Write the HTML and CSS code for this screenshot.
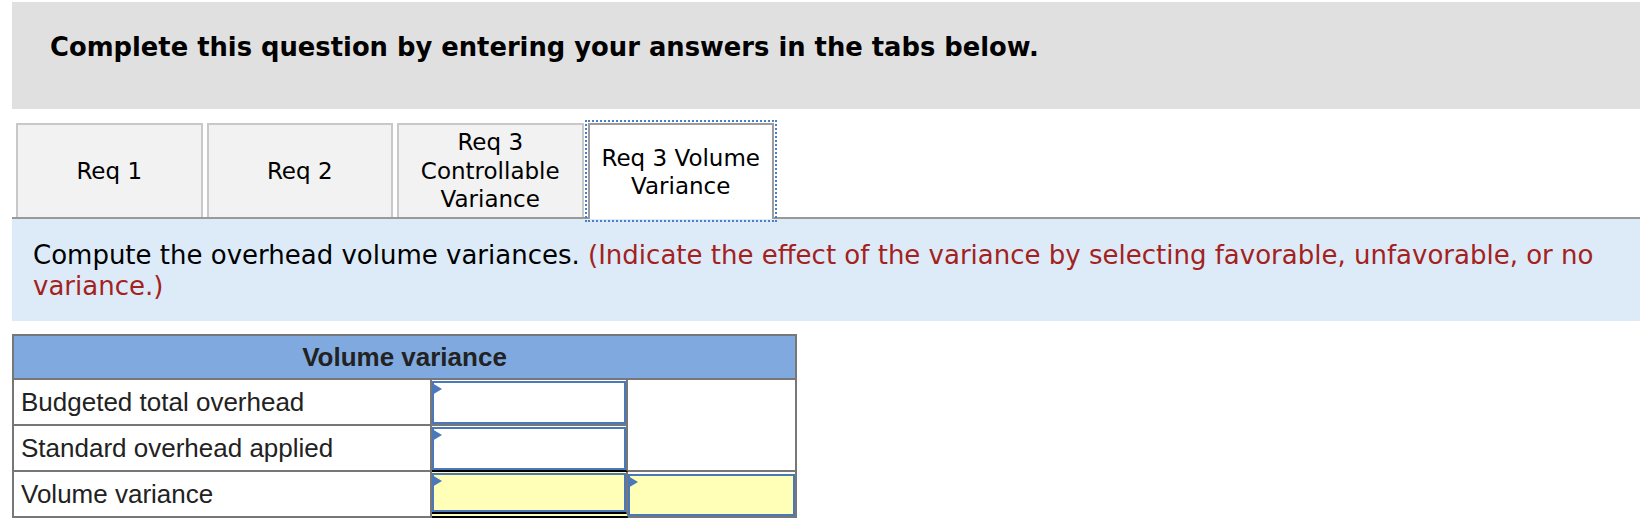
FILE: index.html
```html
<!DOCTYPE html>
<html lang="en">
<head>
<meta charset="utf-8">
<title>Volume variance</title>
<link rel="stylesheet" href="styles.css">
</head>
<body>
<div class="page">
  <div class="instructions">
    <h2 class="instructions-title">Complete this question by entering your answers in the tabs below.</h2>
  </div>

  <div class="tabs">
    <div class="tab">Req 1</div>
    <div class="tab">Req 2</div>
    <div class="tab">Req 3 Controllable Variance</div>
    <div class="tab active">Req 3 Volume Variance</div>
  </div>

  <p class="prompt">Compute the overhead volume variances. <span class="hint">(Indicate the effect of the variance by selecting favorable, unfavorable, or no variance.)</span></p>

  <div class="vtable">
    <div class="vt-head">Volume variance</div>

    <div class="vt-label">Budgeted total overhead</div>
    <div class="vt-amount"><div class="entry"></div></div>
    <div class="vt-blank"></div>

    <div class="vt-label">Standard overhead applied</div>
    <div class="vt-amount vt-subtotal"><div class="entry"></div></div>

    <div class="vt-label vt-last">Volume variance</div>
    <div class="vt-amount vt-total"><div class="entry entry-yellow"></div></div>
    <div class="vt-effect"><div class="entry entry-yellow"></div></div>
  </div>
</div>
</body>
</html>
```

FILE: styles.css
```css
html, body {
  margin: 0;
  padding: 0;
  background: #ffffff;
}

.page {
  padding: 2px 0 0 12px;
  font-family: "DejaVu Sans", Verdana, sans-serif;
  color: #000;
}

.instructions {
  background: #e0e0e0;
  padding: 30px 38px 47px;
}

.instructions-title {
  margin: 0;
  font-size: 25.8px;
  line-height: 30px;
  font-weight: bold;
  color: #000;
}

.tabs {
  margin-top: 14px;
  display: flex;
  gap: 4px;
  padding-left: 4px;
  border-bottom: 2px solid #999999;
}

.tab {
  box-sizing: border-box;
  width: 186.5px;
  height: 94px;
  border: 2px solid #c8c8c8;
  border-bottom: 0;
  background: #f2f2f2;
  display: flex;
  align-items: center;
  justify-content: center;
  text-align: center;
  padding: 0 6px;
  font-size: 23px;
  line-height: 28.5px;
  color: #000;
}

.tab.active {
  background: #ffffff;
  border-color: #9c9c9c;
  height: 96px;
  margin-bottom: -2px;
  outline: 2px dotted #4a7fc4;
  outline-offset: 1px;
}

.prompt {
  margin: 0;
  background: #ddebf8;
  padding: 21px 21px 19px 21px;
  font-size: 26px;
  line-height: 31px;
  color: #000;
}

.hint {
  color: #a3221d;
}

.vtable {
  box-sizing: border-box;
  margin-top: 13px;
  width: 785px;
  display: grid;
  grid-template-columns: 418px 196px 167px;
  grid-template-rows: 44px 46px 46px 46px;
  border: 2px solid #777777;
  border-bottom: 0;
  font-family: "Liberation Sans", Arial, sans-serif;
  font-size: 26px;
  color: #222222;
}

.vt-head {
  grid-column: 1 / -1;
  background: #80aadf;
  border-bottom: 2px solid #777777;
  display: flex;
  align-items: center;
  justify-content: center;
  font-weight: bold;
}

.vt-label {
  box-sizing: border-box;
  border-right: 2px solid #777777;
  border-bottom: 2px solid #777777;
  padding-left: 7px;
  display: flex;
  align-items: center;
  white-space: nowrap;
}

.vt-amount {
  box-sizing: border-box;
  border-right: 2px solid #777777;
  border-bottom: 2px solid #777777;
  padding-top: 1px;
  display: flex;
}

.vt-amount.vt-subtotal {
  border-bottom-color: #000000;
}

.vt-amount.vt-total {
  border-bottom: 6px double #000000;
  background: #ffffb7;
}

.vt-blank {
  grid-row: 2 / span 2;
  grid-column: 3;
  border-bottom: 2px solid #777777;
  background: #ffffff;
}

.vt-effect {
  box-sizing: border-box;
  border-bottom: 2px solid #777777;
  padding-top: 2px;
  display: flex;
}

.entry {
  position: relative;
  box-sizing: border-box;
  flex: 1;
  border: 2px solid #4a78b8;
  background: #ffffff;
}

.entry-yellow {
  background: #ffffb7;
}

.entry::before {
  content: "";
  position: absolute;
  left: -2px;
  top: 0;
  width: 0;
  height: 0;
  border-left: 10px solid #4a78b8;
  border-top: 6px solid transparent;
  border-bottom: 6px solid transparent;
}
```
